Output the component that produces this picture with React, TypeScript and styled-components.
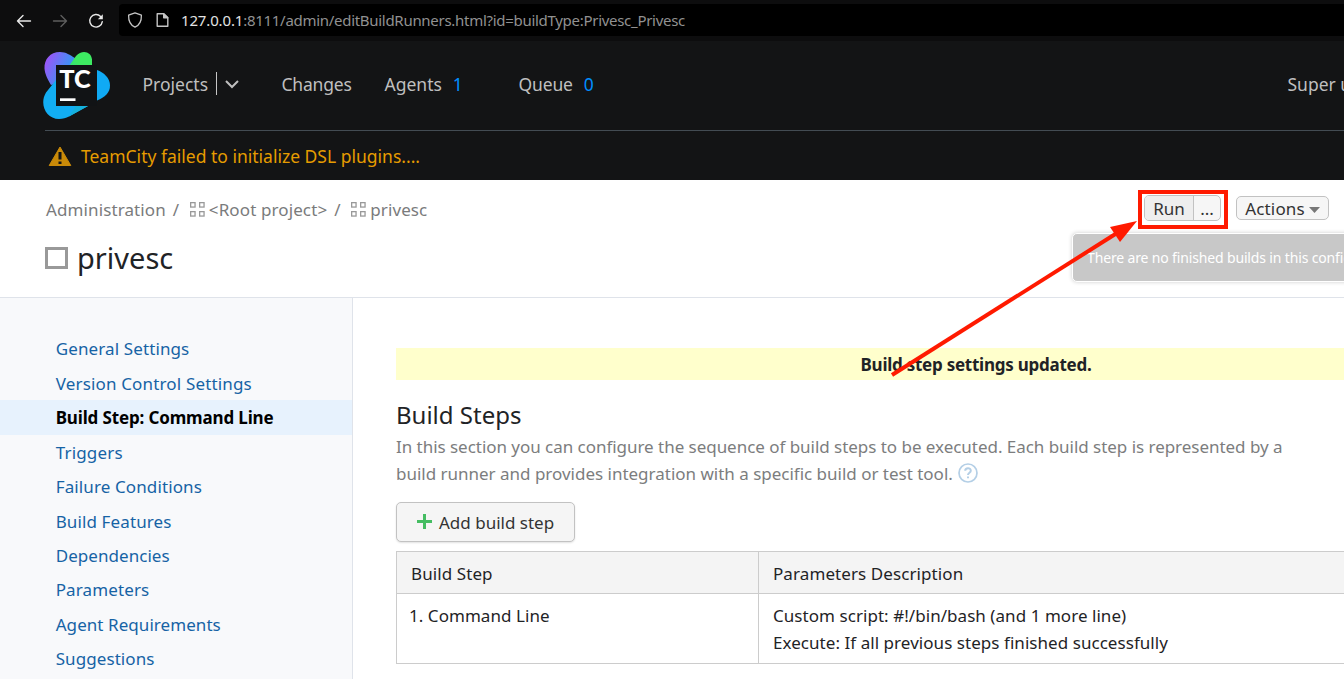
import React from "react";
import styled, { createGlobalStyle } from "styled-components";

const Global = createGlobalStyle`
  * { box-sizing: border-box; }
  html, body { margin: 0; padding: 0; overflow: hidden; }
  body { font-family: "Noto Sans", "Open Sans", sans-serif; font-size: 17px; color: #1f2326; background: #fff; }
`;

const Page = styled.div`
  position: relative;
  width: 1344px;
  height: 679px;
  overflow: hidden;
  display: flex;
  flex-direction: column;
  white-space: nowrap;
`;

const BrowserBar = styled.div`
  height: 41px;
  flex: none;
  background: #0d0d0e;
  display: flex;
  align-items: center;
  padding-left: 16px;
`;

const NavIcons = styled.div`
  display: flex;
  gap: 20px;
  width: 103px;
  flex: none;
`;

const AddressField = styled.div`
  flex: 1;
  height: 32px;
  margin-bottom: 1px;
  background: #000;
  border-radius: 4px 0 0 4px;
  display: flex;
  align-items: center;
  padding-left: 8px;
  gap: 12px;
`;

const Address = styled.div`
  color: #919191;
  font-size: 15px;
  letter-spacing: -0.29px;
  b { font-weight: 400; color: #e2e2e2; letter-spacing: -0.15px; }
`;

const Header = styled.header`
  height: 139px;
  flex: none;
  background: #131415;
  padding-left: 45px;
`;

const Nav = styled.nav`
  height: 90px;
  border-bottom: 1px solid #434c53;
  display: flex;
  align-items: center;
  color: #bfbfbf;
  font-size: 17.5px;
`;

const Logo = styled.svg`
  width: 70px;
  height: 70px;
  margin-left: -3px;
  margin-right: 30.5px;
  flex: none;
`;

const NavItem = styled.div<{ $w: number; $ls?: number }>`
  width: ${(p) => p.$w}px;
  flex: none;
  display: flex;
  align-items: center;
  padding-bottom: 3px;
  letter-spacing: ${(p) => p.$ls ?? 0}px;
`;

const NavSplit = styled.span`
  width: 1px;
  height: 23px;
  background: #c6c6c6;
  margin: -2px 8px 0 8px;
`;

const Count = styled.span`
  color: #008eff;
  margin-left: 11px;
`;

const Warning = styled.div`
  height: 49px;
  display: flex;
  align-items: center;
  gap: 9px;
  padding: 1px 0 0 3px;
  color: #e69c00;
  font-size: 17.5px;
`;

const TitleArea = styled.section`
  height: 118px;
  flex: none;
  border-bottom: 1px solid #dfe3ea;
  padding: 15px 15px 0 46px;
  display: flex;
  justify-content: space-between;
`;

const Crumbs = styled.div`
  display: flex;
  align-items: center;
  height: 29px;
  color: #7a7b7c;
  font-size: 17px;
  letter-spacing: 0.11px;
`;

const Slash = styled.span`
  width: 17px;
  margin-left: 7px;
`;

const Title = styled.h1`
  margin: 13px 0 0 -1px;
  height: 40px;
  display: flex;
  align-items: center;
  gap: 9px;
  font-size: 29px;
  font-weight: 400;
`;

const Square = styled.span`
  width: 23px;
  height: 22px;
  margin-top: 1px;
  border: 3px solid #999;
`;

const Toolbar = styled.div`
  display: flex;
  gap: 15px;
  align-items: flex-start;
`;

const SmallButton = styled.div<{ $w: number }>`
  width: ${(p) => p.$w}px;
  height: 24px;
  margin-top: 1px;
  display: flex;
  align-items: center;
  justify-content: center;
  gap: 4px;
  border: 1px solid #c2c2c2;
  border-radius: 5px;
  background: #f6f6f6;
  color: #333;
  font-size: 17px;
  letter-spacing: 0.15px;
`;

const Caret = styled.svg`
  margin-top: 3px;
`;

const RunGroup = styled.div`
  width: 77px;
  height: 26px;
  display: grid;
  grid-template-columns: 49px 1fr;
  border: 1px solid #c2c2c2;
  border-radius: 5px;
  background: #f6f6f6;
  color: #333;
  line-height: 25px;
  text-align: center;
  overflow: hidden;
`;

const RunPart = styled.span<{ $main?: boolean }>`
  background: ${(p) => (p.$main ? "#eee" : "transparent")};
  border-right: ${(p) => (p.$main ? "1px solid #c2c2c2" : "0")};
`;

const Body = styled.div`
  flex: 1;
  display: flex;
  min-height: 0;
`;

const Sidebar = styled.aside`
  width: 353px;
  flex: none;
  background: #f8f9fb;
  border-right: 1px solid #dfe3ea;
  padding-top: 33.4px;
`;

const SideItem = styled.div<{ $active?: boolean; $ls?: number }>`
  height: 34.45px;
  line-height: 35px;
  padding-left: 55.7px;
  font-size: 17px;
  letter-spacing: ${(p) => p.$ls ?? 0.12}px;
  font-weight: ${(p) => (p.$active ? 700 : 400)};
  color: ${(p) => (p.$active ? "#000" : "#1663a5")};
  background: ${(p) => (p.$active ? "#e7f2fd" : "transparent")};
`;

const Main = styled.main`
  width: 1203px;
  flex: none;
  padding: 50px 0 0 43px;
`;

const Notice = styled.div`
  height: 32px;
  line-height: 34px;
  background: #ffffcc;
  text-align: center;
  font-weight: 700;
  letter-spacing: -0.25px;
`;

const Heading = styled.h2`
  margin: 18px 0 0;
  height: 35px;
  line-height: 33px;
  font-size: 24px;
  font-weight: 400;
`;

const Intro = styled.div`
  line-height: 27px;
  color: #7c7d7e;
  font-size: 17px;
`;

const IntroLine = styled.div<{ $ls?: number }>`
  display: flex;
  align-items: center;
  gap: 5px;
  height: 27px;
  letter-spacing: ${(p) => p.$ls ?? 0}px;
`;

const HelpIcon = styled.svg`
  margin-top: -2px;
`;

const AddButton = styled.div`
  width: 179px;
  height: 40px;
  margin-top: 15px;
  display: flex;
  align-items: center;
  padding: 0 0 0 20px;
  gap: 7px;
  border: 1px solid #c2c2c2;
  border-radius: 5px;
  background: #f5f5f5;
  color: #333;
  box-shadow: 0 1px 2px rgba(0, 0, 0, 0.12);
`;

const PlusIcon = styled.svg`
  margin-top: -2px;
`;

const Table = styled.div`
  margin-top: 9px;
  display: grid;
  grid-template-columns: 362px 1fr;
  border-top: 1px solid #ccc;
  border-left: 1px solid #ccc;
`;

const Cell = styled.div<{ $head?: boolean; $pad: number }>`
  height: ${(p) => (p.$head ? 42 : 70)}px;
  padding: 8px 0 0 ${(p) => p.$pad}px;
  line-height: 27px;
  letter-spacing: ${(p) => (p.$head ? 0.09 : 0.05)}px;
  background: ${(p) => (p.$head ? "#f4f4f4" : "#fff")};
  border-right: 1px solid #ccc;
  border-bottom: 1px solid #ccc;
`;

const Tooltip = styled.div`
  position: absolute;
  left: 1072px;
  top: 233px;
  width: 400px;
  height: 49px;
  line-height: 47px;
  padding-left: 14px;
  border: 1px solid #fff;
  border-radius: 5px;
  background: #c8c8c8;
  box-shadow: 0 0 4px rgba(0, 0, 0, 0.2);
  color: #fff;
  font-size: 14px;
  letter-spacing: -0.15px;
`;

const Highlight = styled.div`
  position: absolute;
  left: 1138px;
  top: 190px;
  width: 90px;
  height: 39px;
  border: 4px solid #ff1a00;
`;

const Arrow = styled.svg`
  position: absolute;
  left: 880px;
  top: 210px;
`;

const GridIcon = styled.svg`
  margin-right: 4px;
`;

const ProjectIcon = () => (
  <GridIcon width="15" height="15" viewBox="0 0 15 15" fill="none" stroke="#999" strokeWidth="1.3">
    <rect x=".65" y=".65" width="4.4" height="4.4" />
    <rect x="9.65" y=".65" width="4.4" height="4.4" />
    <rect x=".65" y="9.65" width="4.4" height="4.4" />
    <rect x="9.65" y="9.65" width="4.4" height="4.4" />
  </GridIcon>
);

const sideItems: { label: string; active?: boolean; ls?: number }[] = [
  { label: "General Settings" },
  { label: "Version Control Settings", ls: 0.16 },
  { label: "Build Step: Command Line", active: true, ls: -0.15 },
  { label: "Triggers", ls: 0.18 },
  { label: "Failure Conditions" },
  { label: "Build Features" },
  { label: "Dependencies", ls: 0.05 },
  { label: "Parameters" },
  { label: "Agent Requirements", ls: 0.06 },
  { label: "Suggestions", ls: 0.08 },
];

export default function App() {
  return (
    <Page>
      <Global />
      <BrowserBar>
        <NavIcons>
          <svg width="16" height="16" viewBox="0 0 16 16" fill="none" stroke="#e8e8e8" strokeWidth="1.4" strokeLinecap="round" strokeLinejoin="round"><path d="M14.5 8H1.5M7 2.5L1.5 8L7 13.5" /></svg>
          <svg width="16" height="16" viewBox="0 0 16 16" fill="none" stroke="#5e5e5e" strokeWidth="1.4" strokeLinecap="round" strokeLinejoin="round"><path d="M1.5 8H14.5M9 2.5L14.5 8L9 13.5" /></svg>
          <svg width="16" height="16" viewBox="0 0 16 16" fill="none" stroke="#e8e8e8" strokeWidth="1.4" strokeLinecap="round"><path d="M12.6 3.4A6.3 6.3 0 1 0 14.3 8.6" /><path d="M14.8 1.2V6.2H9.8Z" fill="#e8e8e8" stroke="none" /></svg>
        </NavIcons>
        <AddressField>
          <svg width="16" height="16" viewBox="0 0 16 16" fill="none" stroke="#c4c4c4" strokeWidth="1.3" strokeLinejoin="round"><path d="M8 .8L14.4 3.2C14.6 8.8 12.3 13.2 8 15.2C3.7 13.2 1.4 8.8 1.6 3.2Z" /></svg>
          <svg width="14" height="16" viewBox="0 0 14 16" fill="none" stroke="#c4c4c4" strokeWidth="1.4" strokeLinejoin="round"><path d="M2.200 1.700H8.700L12.800 5.700V14.300H2.200Z" /><path d="M8.700 1.700V5.700H12.800Z" fill="#c4c4c4" /></svg>
          <Address><b>127.0.0.1</b>:8111/admin/editBuildRunners.html?id=buildType:Privesc_Privesc</Address>
        </AddressField>
      </BrowserBar>
      <Header>
        <Nav>
          <Logo viewBox="0 0 70 70">
            <defs>
              <linearGradient id="violet" x1="0" y1=".2" x2="1" y2=".6"><stop offset=".05" stopColor="#9a56f8" /><stop offset=".55" stopColor="#4c88f5" /><stop offset="1" stopColor="#12a9f2" /></linearGradient>
              <linearGradient id="green" x1="1" y1="0" x2="0" y2="1"><stop offset=".35" stopColor="#3dea62" /><stop offset=".6" stopColor="#2fdc85" /><stop offset="1" stopColor="#0cb0f2" /></linearGradient>
            </defs>
            <path d="M18 1C8 1 2 8.500 2.500 17.500C2.800 23 6 29 9 34L40 26L33 7C28 4 24 1 18 1Z" fill="url(#violet)" />
            <path d="M27 15L34 5C40-2 49.500 .5 50 8.500V15L40 30L12 32Z" fill="url(#green)" />
            <path d="M14 29L4 41.500C-3 53 4 68 17 68C21 68 24 67 27 65.500L46 55L24 40Z" fill="#12aef3" />
            <path d="M27 65.500L46 55H34Z" fill="#15b1dc" />
            <path d="M55 19C62 21.500 68 27 68 34.500C68 42 63 46 55 49.500Z" fill="#10aaf4" />
            <rect x="14" y="14" width="41" height="41" fill="#111315" />
            <text x="17.200" y="36.500" fontFamily="Lato, sans-serif" fontWeight="900" fontSize="24" textLength="31.500" lengthAdjust="spacingAndGlyphs" fill="#fff">TC</text>
            <rect x="18" y="47.300" width="15.500" height="2.700" fill="#fff" />
          </Logo>
          <NavItem $w={139}>Projects<NavSplit />
            <svg width="14" height="9" viewBox="0 0 14 9" fill="none" stroke="#bfbfbf" strokeWidth="2"><path d="M1 1L7 7L13 1" /></svg>
          </NavItem>
          <NavItem $w={103} $ls={-0.2}>Changes</NavItem>
          <NavItem $w={134}>Agents<Count>1</Count></NavItem>
          <NavItem $w={769} $ls={-0.15}>Queue<Count>0</Count></NavItem>
          <NavItem $w={100}>Super user</NavItem>
        </Nav>
        <Warning>
          <svg width="24" height="21" viewBox="0 0 24 21"><path d="M12 1L22.800 19.500H1.200Z" fill="#c98a08" stroke="#c98a08" strokeWidth="1" strokeLinejoin="round" /><path d="M12 6V13.500M12 15.500V18" stroke="#131415" strokeWidth="3" /></svg>
          TeamCity failed to initialize DSL plugins....
        </Warning>
      </Header>
      <TitleArea>
        <div>
          <Crumbs>
            Administration<Slash>/</Slash>
            <ProjectIcon />&lt;Root project&gt;<Slash>/</Slash>
            <ProjectIcon />privesc
          </Crumbs>
          <Title><Square />privesc</Title>
        </div>
        <Toolbar>
          <RunGroup><RunPart $main>Run</RunPart><RunPart>...</RunPart></RunGroup>
          <SmallButton $w={93}>Actions
            <Caret width="11" height="6" viewBox="0 0 11 6"><path d="M0 0H11L5.500 6Z" fill="#777" /></Caret>
          </SmallButton>
        </Toolbar>
      </TitleArea>
      <Body>
        <Sidebar>
          {sideItems.map((i) => (
            <SideItem key={i.label} $active={i.active} $ls={i.ls}>{i.label}</SideItem>
          ))}
        </Sidebar>
        <Main>
          <Notice>Build step settings updated.</Notice>
          <Heading>Build Steps</Heading>
          <Intro>
            <IntroLine $ls={-0.035}>In this section you can configure the sequence of build steps to be executed. Each build step is represented by a</IntroLine>
            <IntroLine $ls={-0.01}>build runner and provides integration with a specific build or test tool.
              <HelpIcon width="20" height="20" viewBox="0 0 20 20" fill="none" stroke="#b4cfe6" strokeWidth="1.700"><circle cx="10" cy="10" r="9" /><path d="M7.200 7.800C7.200 4.300 12.800 4.300 12.800 7.700C12.800 9.800 10 9.800 10 12M10 13.500V15.300" strokeWidth="2" /></HelpIcon>
            </IntroLine>
          </Intro>
          <AddButton>
            <PlusIcon width="15" height="15" viewBox="0 0 15 15" stroke="#45bd62" strokeWidth="3"><path d="M0 7.500H15M7.500 0V15" /></PlusIcon>
            Add build step
          </AddButton>
          <Table>
            <Cell $head $pad={14}>Build Step</Cell>
            <Cell $head $pad={14}>Parameters Description</Cell>
            <Cell $pad={12}>1. Command Line</Cell>
            <Cell $pad={14}>Custom script: #!/bin/bash (and 1 more line)<br />Execute: If all previous steps finished successfully</Cell>
          </Table>
        </Main>
      </Body>
      <Tooltip>There are no finished builds in this configuration</Tooltip>
      <Highlight />
      <Arrow width="260" height="170" viewBox="880 210 260 170">
        <path d="M892 375L1117 233" stroke="#ff1a00" strokeWidth="4" />
        <path d="M1137 221L1110 227L1120 242Z" fill="#ff1a00" />
      </Arrow>
    </Page>
  );
}
